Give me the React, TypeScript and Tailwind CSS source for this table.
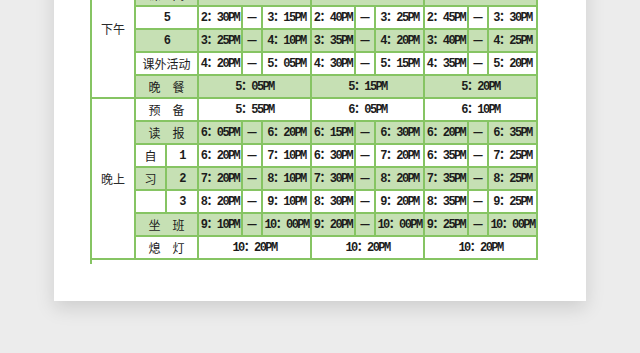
import React from "react";

const CJK = { fontFamily: '"Noto Sans CJK SC", "Noto Sans", sans-serif' };
const MONO = { fontFamily: '"Liberation Mono", "Noto Sans CJK SC", monospace' };

type Row =
  | { kind: "pair"; label: string[]; times: [string, string][]; green: boolean }
  | { kind: "merged"; label: string[]; times: string[]; green: boolean }
  | { kind: "sub"; sub: string; num: string; times: [string, string][]; green: boolean };

const afternoon: Row[] = [
  { kind: "pair", label: ["4"], times: [["1：40PM", "2：25PM"], ["1：50PM", "2：35PM"], ["1：55PM", "2：40PM"]], green: false },
  { kind: "merged", label: ["课", "间"], times: ["2：20PM", "2：30PM", "2：35PM"], green: true },
  { kind: "pair", label: ["5"], times: [["2：30PM", "3：15PM"], ["2：40PM", "3：25PM"], ["2：45PM", "3：30PM"]], green: false },
  { kind: "pair", label: ["6"], times: [["3：25PM", "4：10PM"], ["3：35PM", "4：20PM"], ["3：40PM", "4：25PM"]], green: true },
  { kind: "pair", label: ["课外活动"], times: [["4：20PM", "5：05PM"], ["4：30PM", "5：15PM"], ["4：35PM", "5：20PM"]], green: false },
  { kind: "merged", label: ["晚", "餐"], times: ["5：05PM", "5：15PM", "5：20PM"], green: true },
];

const evening: Row[] = [
  { kind: "merged", label: ["预", "备"], times: ["5：55PM", "6：05PM", "6：10PM"], green: false },
  { kind: "pair", label: ["读", "报"], times: [["6：05PM", "6：20PM"], ["6：15PM", "6：30PM"], ["6：20PM", "6：35PM"]], green: true },
  { kind: "sub", sub: "自", num: "1", times: [["6：20PM", "7：10PM"], ["6：30PM", "7：20PM"], ["6：35PM", "7：25PM"]], green: false },
  { kind: "sub", sub: "习", num: "2", times: [["7：20PM", "8：10PM"], ["7：30PM", "8：20PM"], ["7：35PM", "8：25PM"]], green: true },
  { kind: "sub", sub: "", num: "3", times: [["8：20PM", "9：10PM"], ["8：30PM", "9：20PM"], ["8：35PM", "9：25PM"]], green: false },
  { kind: "pair", label: ["坐", "班"], times: [["9：10PM", "10：00PM"], ["9：20PM", "10：00PM"], ["9：25PM", "10：00PM"]], green: true },
  { kind: "merged", label: ["熄", "灯"], times: ["10：20PM", "10：20PM", "10：20PM"], green: false },
];

function bg(green: boolean) {
  return green ? "bg-[#c6e0b4]" : "bg-white";
}

function Label({ parts }: { parts: string[] }) {
  if (parts.length === 2) {
    return (
      <span style={CJK} className="flex gap-[12px] text-[12px] text-[#1c1c1c]">
        <span>{parts[0]}</span>
        <span>{parts[1]}</span>
      </span>
    );
  }
  if (/\d/.test(parts[0])) return <Time t={parts[0]} />;
  return (
    <span style={CJK} className="text-[12px] text-[#1c1c1c]">
      {parts[0]}
    </span>
  );
}

function Time({ t }: { t: string }) {
  return (
    <span style={MONO} className="text-[12px] leading-none font-bold tracking-[-1.6px] text-[#1c1c1c] whitespace-nowrap">
      {t}
    </span>
  );
}

function Dash() {
  return (
    <span style={CJK} className="text-[10px] font-bold leading-none text-[#1c1c1c]">
      一
    </span>
  );
}

function renderRow(r: Row, i: number) {
  const b = bg(r.green);
  const cells: React.ReactNode[] = [];
  if (r.kind === "sub") {
    cells.push(
      <div key="s" style={CJK} className={`${b} flex items-center justify-center text-[12px] text-[#1c1c1c]`}>
        {r.sub}
      </div>
    );
    cells.push(
      <div key="n" className={`${b} flex items-center justify-center`}>
        <Time t={r.num} />
      </div>
    );
  } else {
    cells.push(
      <div key="l" className={`${b} col-span-2 flex items-center justify-center`}>
        <Label parts={r.label} />
      </div>
    );
  }
  if (r.kind === "merged") {
    r.times.forEach((t, j) => {
      cells.push(
        <div key={`m${j}`} className={`${b} col-span-3 flex items-center justify-center`}>
          <Time t={t} />
        </div>
      );
    });
  } else {
    r.times.forEach(([a, c], j) => {
      cells.push(
        <div key={`a${j}`} className={`${b} flex items-center justify-center`}>
          <Time t={a} />
        </div>
      );
      cells.push(
        <div key={`d${j}`} className={`${b} flex items-center justify-center`}>
          <Dash />
        </div>
      );
      cells.push(
        <div key={`b${j}`} className={`${b} flex items-center justify-center`}>
          <Time t={c} />
        </div>
      );
    });
  }
  return <React.Fragment key={i}>{cells}</React.Fragment>;
}

export default function App() {
  return (
    <div className="w-[640px] h-[353px] overflow-hidden bg-[#ececec]">
      <div className="ml-[54px] mt-[-41px] w-[532px] bg-white pl-[36px] pb-[37px] shadow-[0_7px_18px_rgba(0,0,0,0.13)]">
        <div className="grid w-max grid-cols-[42px_29px_30px_42px_18px_47px_42px_18px_47px_42px_18px_47px] auto-rows-[21px] gap-[2px] bg-[#86c463] p-[2px]">
          <div style={CJK} className="row-span-6 bg-white flex items-center justify-center text-[12px] text-[#2a2a2a]">
            下午
          </div>
          {afternoon.map((r, i) => renderRow(r, i))}
          <div style={CJK} className="row-span-7 bg-white flex items-center justify-center text-[12px] text-[#2a2a2a]">
            晚上
          </div>
          {evening.map((r, i) => renderRow(r, 100 + i))}
        </div>
        <div className="w-[2px] h-[4px] bg-[#86c463]" />
      </div>
    </div>
  );
}
